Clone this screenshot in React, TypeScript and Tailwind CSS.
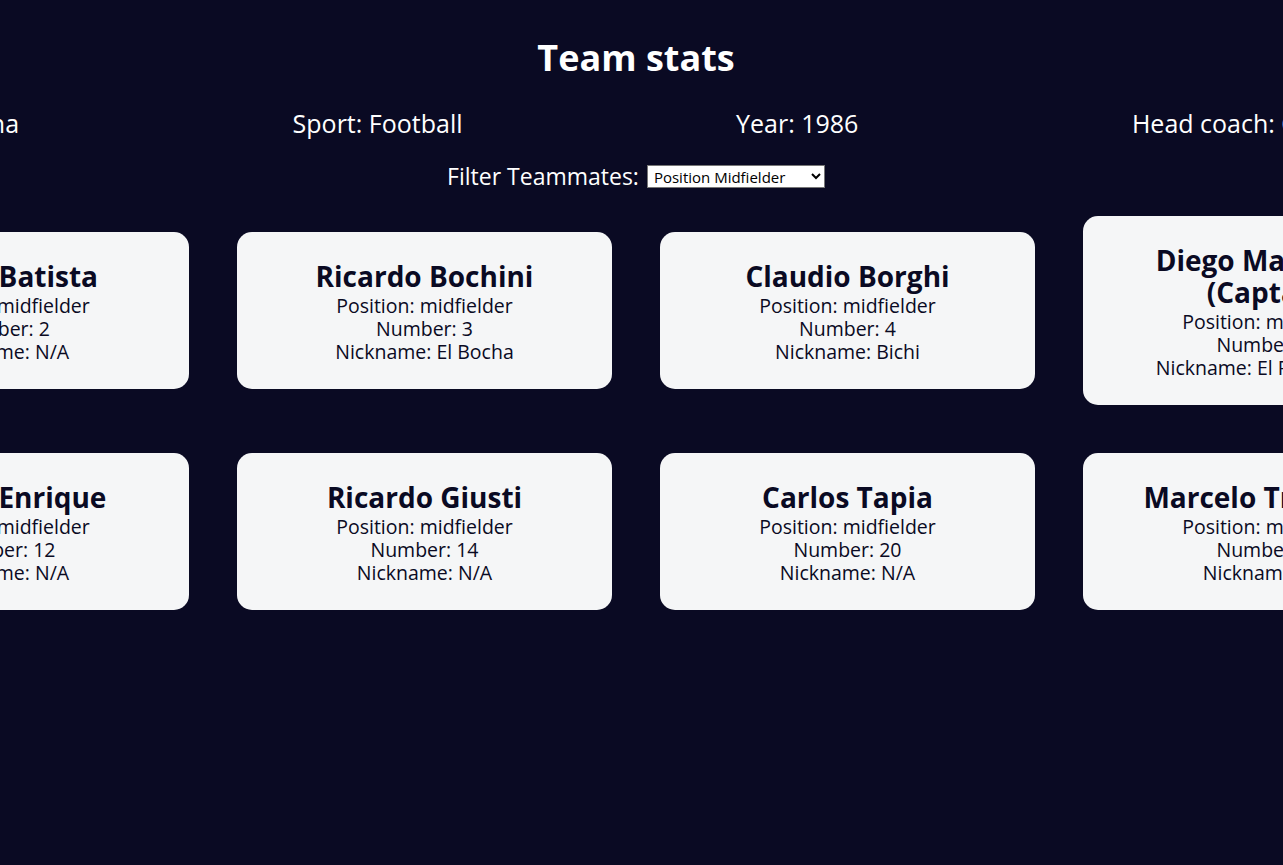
import React, { useState } from 'react';

interface Player {
    name: string;
    position: string;
    number: number;
    isCaptain: boolean;
    nickname: string | null;
}

const players: Player[] = [
    { name: 'Sergio Batista', position: 'midfielder', number: 2, isCaptain: false, nickname: null },
    { name: 'Ricardo Bochini', position: 'midfielder', number: 3, isCaptain: false, nickname: 'El Bocha' },
    { name: 'Claudio Borghi', position: 'midfielder', number: 4, isCaptain: false, nickname: 'Bichi' },
    { name: 'Diego Maradona', position: 'midfielder', number: 10, isCaptain: true, nickname: 'El Pibe de Oro' },
    { name: 'Héctor Enrique', position: 'midfielder', number: 12, isCaptain: false, nickname: null },
    { name: 'Ricardo Giusti', position: 'midfielder', number: 14, isCaptain: false, nickname: null },
    { name: 'Carlos Tapia', position: 'midfielder', number: 20, isCaptain: false, nickname: null },
    { name: 'Marcelo Trobbiani', position: 'midfielder', number: 21, isCaptain: false, nickname: null },
];

export default function App() {
    const [filter, setFilter] = useState<string>('midfielder');

    const shown = players.filter((p) => filter === 'all' || p.position === filter);

    return (
        <div className="min-h-screen w-full overflow-hidden bg-[#0a0a23] font-['Open_Sans','Noto_Sans',sans-serif] text-white">
            <div className="flex w-[1272px] justify-center">
                <div className="w-[1890px] shrink-0">
                    {/* 제목 */}
                    <h1 className="pt-[34px] text-center text-[36px] font-bold leading-[48px]">
                        Team stats
                    </h1>

                    {/* 팀 정보 */}
                    <div className="mt-[26px] flex justify-around text-[25px] leading-[30px]">
                        <p>Team: Argentina</p>
                        <p>Sport: Football</p>
                        <p>Year: 1986</p>
                        <p>Head coach: Carlos Bilardo</p>
                    </div>

                    {/* 필터 */}
                    <div className="mb-[1px] mt-[23px] flex items-center justify-center gap-2 text-[23px] leading-[30px]">
                        <label htmlFor="players">Filter Teammates:</label>
                        <select
                            id="players"
                            value={filter}
                            onChange={(e) => setFilter(e.target.value)}
                            className="h-[23px] w-[178px] border border-[#767676] bg-white px-[2px] text-[15px] leading-[20px] text-black"
                        >
                            <option value="all">All Players</option>
                            <option value="nickname">Nicknames</option>
                            <option value="forward">Position Forward</option>
                            <option value="midfielder">Position Midfielder</option>
                            <option value="defender">Position Defender</option>
                            <option value="goalkeeper">Position Goalkeeper</option>
                        </select>
                    </div>

                    {/* 선수 카드 */}
                    <div className="flex flex-wrap items-center justify-center">
                        {shown.map((p) => (
                            <div
                                key={p.number}
                                className="m-6 w-[375px] rounded-[15px] bg-[#f5f6f7] px-[28px] pb-[26px] pt-[28px] text-center text-[#0a0a23]"
                            >
                                <h2 className="mb-[2px] text-[28px] font-bold leading-[32px]">
                                    {p.isCaptain ? `${p.name} (Captain)` : p.name}
                                </h2>
                                <p className="text-[19.5px] leading-[23px]">Position: {p.position}</p>
                                <p className="text-[19.5px] leading-[23px]">Number: {p.number}</p>
                                <p className="text-[19.5px] leading-[23px]">Nickname: {p.nickname ?? 'N/A'}</p>
                            </div>
                        ))}
                    </div>
                </div>
            </div>
        </div>
    );
}
